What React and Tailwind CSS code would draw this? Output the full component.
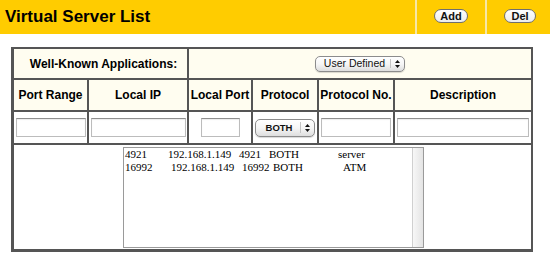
import React from 'react';

const Arrows = () => (
  <svg width="5" height="8" viewBox="0 0 5 8" className="shrink-0">
    <path d="M2.5 0 L5 3 L0 3 Z" fill="#111" />
    <path d="M0 5 L5 5 L2.5 8 Z" fill="#111" />
  </svg>
);

const FakeSelect = ({ label, className, textClass }) => (
  <div
    className={`flex items-center rounded-[5px] border border-[#8c8c8c] bg-gradient-to-b from-white via-[#f6f6f6] to-[#dedede] shadow-[0_1px_1px_rgba(0,0,0,0.15)] ${className}`}
  >
    <span className={`flex-1 text-center text-[#111] leading-none ${textClass}`}>{label}</span>
    <span className="h-[70%] w-px bg-[#c4c4c4]" />
    <span className="flex w-[13px] justify-center">
      <Arrows />
    </span>
  </div>
);

const TextBox = ({ w }) => (
  <div className={`h-[19px] ${w} border border-[#bcbcbc] border-t-[#8f8f8f] bg-white shadow-[inset_0_1px_1px_rgba(0,0,0,0.08)]`} />
);

const HeadCell = ({ children, span = '' }) => (
  <div className={`flex items-center justify-center bg-[#fffdf0] text-[12px] font-bold text-black ${span}`}>
    {children}
  </div>
);

const InputCell = ({ children }) => (
  <div className="flex items-center justify-center bg-white">{children}</div>
);

const rules = [
  { cols: [['4921', 'w-[43px]'], ['192.168.1.149', 'w-[71px]'], ['4921', 'w-[30px]'], ['BOTH', 'w-[69px]'], ['server', '']] },
  { cols: [['16992', 'w-[46px]'], ['192.168.1.149', 'w-[71px]'], ['16992', 'w-[31px]'], ['BOTH', 'w-[70px]'], ['ATM', '']] },
];

const App = () => {
  return (
    <div className="w-[550px] h-[258px] overflow-hidden bg-white font-['Liberation_Sans',Arial,sans-serif]">
      {/* title bar */}
      <div className="flex h-[34px] bg-[#ffcc00]">
        <div className="flex w-[415px] shrink-0 items-center pl-[5px] pb-[2px]">
          <h1 className="text-[17px] font-bold leading-none text-black">Virtual Server List</h1>
        </div>
        <div className="w-[2px] bg-[#f7e7a6]" />
        <div className="flex w-[68px] items-center justify-center pb-[2px]">
          <button className="flex h-[14px] w-[34px] items-center justify-center rounded-full border border-[#6f6f6f] bg-gradient-to-b from-white to-[#ececec] text-[11px] font-bold leading-none text-[#111]">
            Add
          </button>
        </div>
        <div className="w-[2px] bg-[#f7e7a6]" />
        <div className="flex flex-1 items-center justify-center pb-[2px] pl-[3px]">
          <button className="flex h-[14px] w-[32px] items-center justify-center rounded-full border border-[#6f6f6f] bg-gradient-to-b from-white to-[#ececec] text-[11px] font-bold leading-none text-[#111]">
            Del
          </button>
        </div>
      </div>

      {/* rule table */}
      <div className="ml-[11px] mt-[13px] grid w-[522px] grid-cols-[73px_98px_62px_64px_74px_136px] grid-rows-[29px_30px_31px_104px] gap-[2px] bg-[#555] pt-[2px] pr-[2px] pb-[3px] pl-[3px]">
        <HeadCell span="col-span-2">
          <span className="pl-[6px]">Well-Known Applications:</span>
        </HeadCell>
        <div className="col-span-4 flex items-center justify-center bg-[#fffdf0]">
          <FakeSelect label="User Defined" className="h-[16px] w-[90px] pl-[3px]" textClass="text-[10.5px]" />
        </div>

        <HeadCell>Port Range</HeadCell>
        <HeadCell>Local IP</HeadCell>
        <HeadCell>Local Port</HeadCell>
        <HeadCell>Protocol</HeadCell>
        <HeadCell>Protocol No.</HeadCell>
        <HeadCell>Description</HeadCell>

        <InputCell><TextBox w="w-[70px]" /></InputCell>
        <InputCell><TextBox w="w-[95px]" /></InputCell>
        <InputCell><TextBox w="w-[39px]" /></InputCell>
        <InputCell>
          <FakeSelect label="BOTH" className="h-[18px] w-[60px] pl-[2px]" textClass="text-[9.5px] font-bold" />
        </InputCell>
        <InputCell><TextBox w="w-[70px]" /></InputCell>
        <InputCell><TextBox w="w-[132px]" /></InputCell>

        <div className="col-span-6 flex items-start bg-white pl-[109px] pt-[2px]">
          <div className="flex h-[101px] w-[301px] border border-[#9a9a9a] bg-white">
            <div className="flex-1 pl-[1px] font-['Liberation_Serif','Times_New_Roman',serif] text-[11px] leading-[13px] text-black">
              {rules.map((r, i) => (
                <div key={i} className="flex whitespace-nowrap">
                  {r.cols.map(([t, w], j) => (
                    <span key={j} className={`inline-block ${w}`}>{t}</span>
                  ))}
                </div>
              ))}
            </div>
            <div className="w-[11px] border-l border-[#d0d0d0] bg-gradient-to-r from-[#f7f7f7] to-[#e4e4e4]" />
          </div>
        </div>
      </div>
    </div>
  );
};

export default App;
